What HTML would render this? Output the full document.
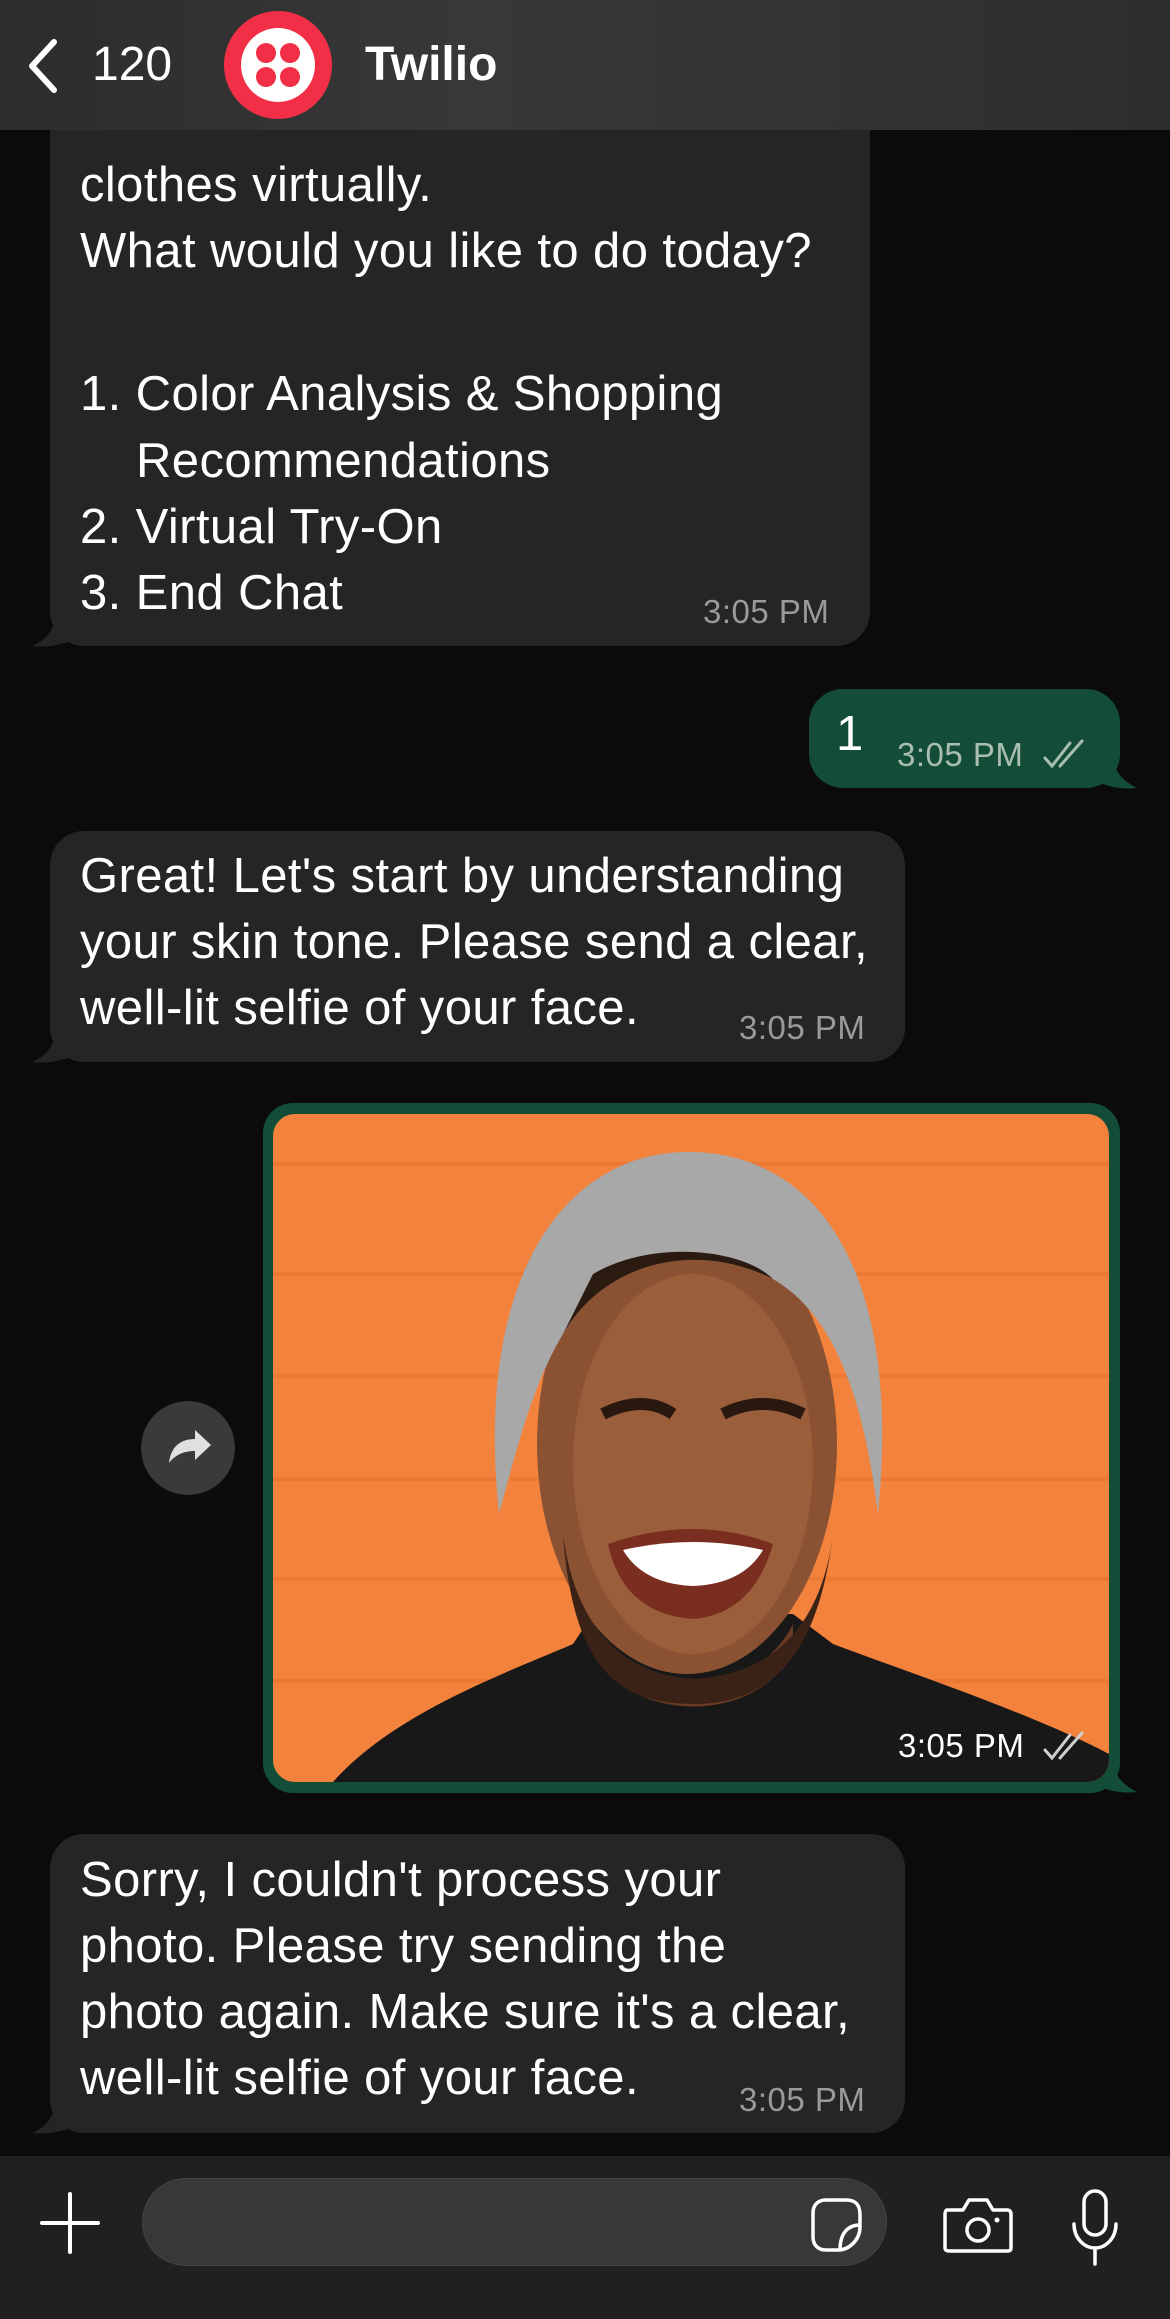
<!DOCTYPE html>
<html><head><meta charset="utf-8"><style>
*{margin:0;padding:0;box-sizing:border-box}
body{width:1170px;height:2319px;background:#0b0b0b;font-family:"Liberation Sans",sans-serif;color:#fff;position:relative;overflow:hidden}
.abs{position:absolute}
.bub{position:absolute;background:#242626;border-radius:34px}
.t{position:absolute;font-size:49px;white-space:nowrap;letter-spacing:0.4px}
.tm{position:absolute;font-size:33px;color:#9a9a9a;white-space:nowrap;letter-spacing:0.5px}
</style></head><body>

<!-- bubble 1 -->
<div class="bub" style="left:50px;top:60px;width:820px;height:586px;border-top-left-radius:0;border-top-right-radius:0"></div>
<svg class="abs" style="left:28px;top:600px" width="50" height="48"><path d="M30 0 C30 25 20 40 4 46 C20 48 35 44 45 40 L45 0Z" fill="#242626"/></svg>
<div class="t" style="left:80px;top:76px">match your skin tone or try on</div>
<div class="t" style="left:80px;top:157px">clothes virtually.</div>
<div class="t" style="left:80px;top:223px">What would you like to do today?</div>
<div class="t" style="left:80px;top:366px">1. Color Analysis &amp; Shopping</div>
<div class="t" style="left:136px;top:433px">Recommendations</div>
<div class="t" style="left:80px;top:499px">2. Virtual Try-On</div>
<div class="t" style="left:80px;top:565px">3. End Chat</div>
<div class="tm" style="left:703px;top:593px">3:05 PM</div>

<!-- header -->
<div class="abs" style="left:0;top:0;width:1170px;height:130px;background:linear-gradient(90deg,#2c2c2c,#383838 40%,#2e2e2e)"></div>
<svg class="abs" style="left:24px;top:38px" width="40" height="56"><path d="M30 4 L8 28 L30 52" stroke="#fff" stroke-width="6" fill="none" stroke-linecap="round" stroke-linejoin="round"/></svg>
<div class="t" style="left:92px;top:37px;font-size:48px;letter-spacing:0">120</div>
<svg class="abs" style="left:223px;top:10px" width="110" height="110"><circle cx="55" cy="55" r="54" fill="#f22f46"/><circle cx="55" cy="55" r="37" fill="#fff"/><circle cx="43" cy="43" r="10" fill="#f22f46"/><circle cx="67" cy="43" r="10" fill="#f22f46"/><circle cx="43" cy="67" r="10" fill="#f22f46"/><circle cx="67" cy="67" r="10" fill="#f22f46"/></svg>
<div class="t" style="left:365px;top:37px;font-size:48px;font-weight:bold;letter-spacing:0">Twilio</div>

<!-- green bubble -->
<div class="bub" style="left:809px;top:689px;width:311px;height:99px;background:#144d37"></div>
<svg class="abs" style="left:1095px;top:740px" width="45" height="50"><path d="M0 0 L14 0 C16 25 22 38 42 48 C25 50 10 46 0 40Z" fill="#144d37"/></svg>
<div class="t" style="left:836px;top:706px">1</div>
<div class="tm" style="left:897px;top:736px;color:#a9bdb3">3:05 PM</div>
<svg class="abs" style="left:1042px;top:738px" width="50" height="34"><path d="M3 20 L10 28 L28 5 M18 28 L40 3" stroke="#a9bdb3" stroke-width="3" fill="none" stroke-linecap="round"/></svg>

<!-- bubble 2 -->
<div class="bub" style="left:50px;top:831px;width:855px;height:231px"></div>
<svg class="abs" style="left:28px;top:1016px" width="50" height="48"><path d="M30 0 C30 25 20 40 4 46 C20 48 35 44 45 40 L45 0Z" fill="#242626"/></svg>
<div class="t" style="left:80px;top:848px">Great! Let's start by understanding</div>
<div class="t" style="left:80px;top:914px">your skin tone. Please send a clear,</div>
<div class="t" style="left:80px;top:980px">well-lit selfie of your face.</div>
<div class="tm" style="left:739px;top:1009px">3:05 PM</div>

<!-- image bubble -->
<div class="bub" style="left:263px;top:1103px;width:857px;height:690px;background:#144d37;border-radius:30px"></div>
<svg class="abs" style="left:1095px;top:1744px" width="45" height="50"><path d="M0 0 L14 0 C16 25 22 38 42 48 C25 50 10 46 0 40Z" fill="#144d37"/></svg>
<svg class="abs" style="left:273px;top:1114px;border-radius:22px" width="836" height="668" viewBox="0 0 836 668">
<rect width="836" height="668" fill="#f3823c"/>
<g stroke="#e5712d" stroke-width="4" opacity=".5"><line x1="0" y1="50" x2="836" y2="50"/><line x1="0" y1="160" x2="836" y2="160"/><line x1="0" y1="262" x2="836" y2="262"/><line x1="0" y1="365" x2="836" y2="365"/><line x1="0" y1="465" x2="836" y2="465"/><line x1="0" y1="567" x2="836" y2="567"/></g>
<path d="M60 668 C120 600 230 560 300 530 L320 500 L520 500 L560 530 C640 560 760 600 836 640 L836 668Z" fill="#181818"/>
<path d="M320 510 C360 590 480 590 520 510 L520 540 C480 610 360 610 320 540Z" fill="#6a3a22"/>
<ellipse cx="414" cy="330" rx="150" ry="230" fill="#8a5233"/>
<ellipse cx="420" cy="350" rx="120" ry="190" fill="#9a5e3b"/>
<path d="M226 400 C200 150 300 38 415 38 C540 38 630 150 605 400 C590 280 560 200 500 165 C420 125 330 150 290 220 C260 270 245 330 226 400Z" fill="#a8a8a8"/>
<path d="M290 220 C330 150 420 125 500 165 C470 135 380 125 320 160Z" fill="#2a1a10"/>
<path d="M330 300 Q370 280 400 300 M450 300 Q490 280 530 300" stroke="#2a1810" stroke-width="12" fill="none"/>
<path d="M335 430 Q420 400 500 430 Q480 500 420 505 Q350 500 335 430Z" fill="#7a2e20"/>
<path d="M350 436 Q420 420 490 436 Q470 470 420 472 Q370 470 350 436Z" fill="#fff"/>
<path d="M290 420 C300 560 350 590 420 590 C500 590 545 540 560 420 C550 500 510 560 420 565 C340 560 300 500 290 420Z" fill="#3a2216"/>
</svg>
<div class="abs" style="left:898px;top:1727px;font-size:33px;color:#fff;letter-spacing:0.5px">3:05 PM</div>
<svg class="abs" style="left:1042px;top:1730px" width="50" height="34"><path d="M3 20 L10 28 L28 5 M18 28 L40 3" stroke="#cfcfcf" stroke-width="3" fill="none" stroke-linecap="round"/></svg>
<svg class="abs" style="left:141px;top:1401px" width="94" height="94"><circle cx="47" cy="47" r="47" fill="#3a3a3a"/><path d="M28 62 C30 45 40 38 54 38 L54 29 L70 44 L54 59 L54 50 C44 50 35 53 28 62Z" fill="#e0e0e0"/></svg>

<!-- bubble 3 -->
<div class="bub" style="left:50px;top:1834px;width:855px;height:299px"></div>
<svg class="abs" style="left:28px;top:2087px" width="50" height="48"><path d="M30 0 C30 25 20 40 4 46 C20 48 35 44 45 40 L45 0Z" fill="#242626"/></svg>
<div class="t" style="left:80px;top:1852px">Sorry, I couldn't process your</div>
<div class="t" style="left:80px;top:1918px">photo. Please try sending the</div>
<div class="t" style="left:80px;top:1984px">photo again. Make sure it's a clear,</div>
<div class="t" style="left:80px;top:2050px">well-lit selfie of your face.</div>
<div class="tm" style="left:739px;top:2081px">3:05 PM</div>

<!-- bottom bar -->
<div class="abs" style="left:0;top:2156px;width:1170px;height:163px;background:#202020"></div>
<svg class="abs" style="left:38px;top:2190px" width="64" height="66"><path d="M32 4 V62 M4 33 H60" stroke="#fff" stroke-width="4" stroke-linecap="round"/></svg>
<div class="abs" style="left:142px;top:2178px;width:745px;height:88px;border-radius:44px;background:#383838;border:1px solid #444"></div>
<svg class="abs" style="left:808px;top:2195px" width="58" height="60"><path d="M18 5 H38 C48 5 52 10 52 20 V32 C52 44 42 55 30 55 H18 C10 55 5 50 5 42 V18 C5 10 10 5 18 5Z M52 30 C40 30 32 38 32 55" stroke="#fff" stroke-width="3.5" fill="none" stroke-linejoin="round"/></svg>
<svg class="abs" style="left:941px;top:2194px" width="74" height="60"><path d="M6 16 H22 L28 6 H46 L52 16 H66 C69 16 70 18 70 20 V54 C70 56 69 57 66 57 H8 C6 57 4 56 4 54 V20 C4 18 5 16 6 16Z" stroke="#fff" stroke-width="3.5" fill="none" stroke-linejoin="round"/><circle cx="37" cy="36" r="11" stroke="#fff" stroke-width="3.5" fill="none"/><circle cx="56" cy="26" r="2.5" fill="#fff"/></svg>
<svg class="abs" style="left:1068px;top:2188px" width="54" height="78"><rect x="16" y="3" width="22" height="44" rx="11" stroke="#fff" stroke-width="3.5" fill="none"/><path d="M6 36 C6 50 16 60 27 60 C38 60 48 50 48 36 M27 60 V76" stroke="#fff" stroke-width="3.5" fill="none" stroke-linecap="round"/></svg>
</body></html>
